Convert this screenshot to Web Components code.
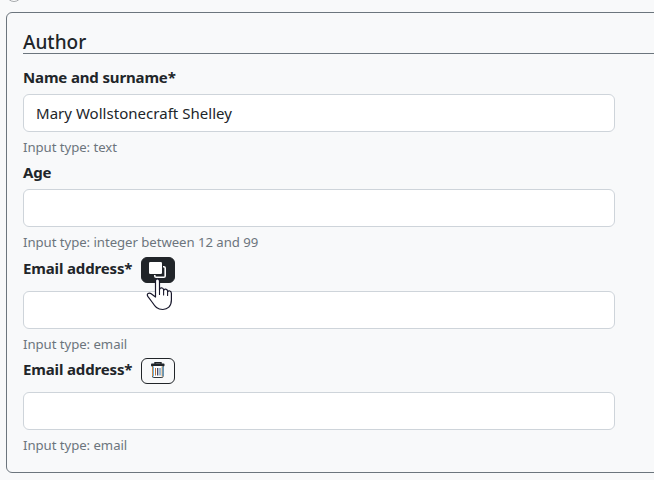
<!DOCTYPE html>
<html lang="en"><head><meta charset="utf-8"><title>Author</title>
<style>html,body{margin:0;height:480px;overflow:hidden;background:#f8f9fa}</style></head><body>
<form-page>
<field-group heading="Author">
<form-field label="Name and surname*" value="Mary Wollstonecraft Shelley" hint="Input type: text"></form-field>
<form-field label="Age" hint="Input type: integer between 12 and 99"></form-field>
<form-field label="Email address*" hint="Input type: email" style="--after:3px"><icon-button slot="action" kind="copy"></icon-button></form-field>
<form-field label="Email address*" hint="Input type: email"><icon-button slot="action" kind="delete"></icon-button></form-field>
</field-group>
</form-page>
<script>
class FormPage extends HTMLElement{
  constructor(){super();this.attachShadow({mode:'open'}).innerHTML=`<style>
:host{display:block;position:relative;height:480px;box-sizing:border-box;padding:12px 0 0 6px;overflow:hidden;font-family:"Noto Sans","Open Sans",sans-serif;color:#212529}
.radio{position:absolute;left:6px;top:-14px;width:16px;height:16px;box-sizing:border-box;border:1px solid #a5a8ab;border-radius:50%;background:#fff}
</style><span class="radio"></span><slot></slot>`}
}
class FieldGroup extends HTMLElement{
  constructor(){super();this.attachShadow({mode:'open'})}
  connectedCallback(){this.shadowRoot.innerHTML=`<style>
:host{display:block;box-sizing:border-box;width:670px;height:461px;border:1px solid #6c757d;border-radius:6px;padding:16px}
h2{margin:0 0 12px;height:25px;box-sizing:border-box;border-bottom:1px solid #6c757d;font-weight:500;font-size:19px;line-height:27px}
</style><h2></h2><slot></slot>`;
  this.shadowRoot.querySelector('h2').textContent=this.getAttribute('heading')}
}
class FormField extends HTMLElement{
  constructor(){super();this.attachShadow({mode:'open'})}
  connectedCallback(){this.shadowRoot.innerHTML=`<style>
:host{display:block;width:592px}
.row{display:flex;align-items:flex-start;gap:9px;box-sizing:border-box;min-height:24px;margin-bottom:4px}
label{font-weight:700;font-size:15px;line-height:23px;letter-spacing:-.15px}
.box{box-sizing:border-box;height:38px;border:1px solid #ced4da;border-radius:6px;background:#fff;padding:0 12px;font-size:15px;line-height:37px;letter-spacing:.03px}
.hint{margin-top:4px;height:21px;margin-bottom:var(--after,4px);font-size:13.2px;line-height:22px;color:#6c757d;letter-spacing:-.05px}
.row.tall{min-height:31px;padding-top:1px}
</style><div class="row"><label></label><slot name="action"></slot></div><div class="box"></div><div class="hint"></div>`;
  const q=s=>this.shadowRoot.querySelector(s);
  q('label').textContent=this.getAttribute('label');
  q('.box').textContent=this.getAttribute('value')||'';
  q('.hint').textContent=this.getAttribute('hint');
  if(this.getAttribute('label').startsWith('Email'))q('.row').classList.add('tall')}
}
class IconButton extends HTMLElement{
  constructor(){super();this.attachShadow({mode:'open'})}
  connectedCallback(){
  const copy=this.getAttribute('kind')==='copy';
  const icon=copy
   ?`<svg class="icon" viewBox="0 0 34 26"><rect x="13.8" y="9.8" width="10.4" height="10.4" rx="1.3" fill="#212529" stroke="#fff" stroke-width="1.6"/><rect x="8" y="5" width="14" height="13" rx="1.5" fill="#212529"/><rect x="8" y="5" width="13" height="12" rx="1.3" fill="#fff"/></svg>
<svg class="cursor" viewBox="0 0 28 34"><path d="M9.5 20V4.2C9.5 1 13.5 1 13.5 4.2V12.5C14 10.3 17.3 10.4 17.6 12.8V13.5C18.2 11.6 21.3 11.8 21.6 14V14.7C22.6 13.2 25.4 13.7 25.4 16.4V23C25.4 29.5 21.5 32.5 16.8 32.5C11.2 32.5 9 29.5 6.4 25.5L1.8 19.4C.1 16.9 3.1 15.2 5.2 16.8Z" fill="#fff" stroke="#17172b" stroke-width="1.2" stroke-linejoin="round"/><path d="M13.5 12V17.5M17.6 13V18M21.6 14.2V18.5" fill="none" stroke="#17172b" stroke-width="1.1" stroke-linecap="round"/></svg>`
   :`<svg class="icon" viewBox="0 0 34 26"><path d="M14 6V4.8H20V6" fill="none" stroke="#212529" stroke-width="1.4"/><rect x="10" y="5.6" width="13.5" height="2.8" rx=".8" fill="#212529"/><path d="M11.5 8V18.5Q11.5 19.5 12.6 19.5H20.9Q22 19.5 22 18.5V8" fill="#fff" stroke="#33383d" stroke-width="1"/><path d="M11.5 8.4V18" stroke="#d18a45" stroke-width="1"/><path d="M12.5 8.4V18.5" stroke="#5fb0ea" stroke-width="1"/><path d="M21 8.4V18.5" stroke="#e0a565" stroke-width="1"/><path d="M22 8.4V18" stroke="#3d91cf" stroke-width="1"/><path d="M14.5 10V17.5" stroke="#b87540" stroke-width="1"/><path d="M16.7 10V17.5" stroke="#30365c" stroke-width="1.2"/><path d="M19 10V17.5" stroke="#3978aa" stroke-width="1"/></svg>`;
  this.shadowRoot.innerHTML=`<style>
:host{display:block;position:relative;width:34px;height:26px}
button{display:block;width:34px;height:26px;box-sizing:border-box;padding:0;border:1px solid #212529;border-radius:6px;background:${copy?'#212529':'#f8f9fa'}}
.icon{position:absolute;left:0;top:0;width:34px;height:26px}
.cursor{position:absolute;left:5px;top:20px;width:28px;height:34px;z-index:2}
</style><button aria-label="${copy?'Duplicate':'Delete'}"></button>${icon}`}
}
customElements.define('form-page',FormPage);
customElements.define('field-group',FieldGroup);
customElements.define('form-field',FormField);
customElements.define('icon-button',IconButton);
</script></body></html>
